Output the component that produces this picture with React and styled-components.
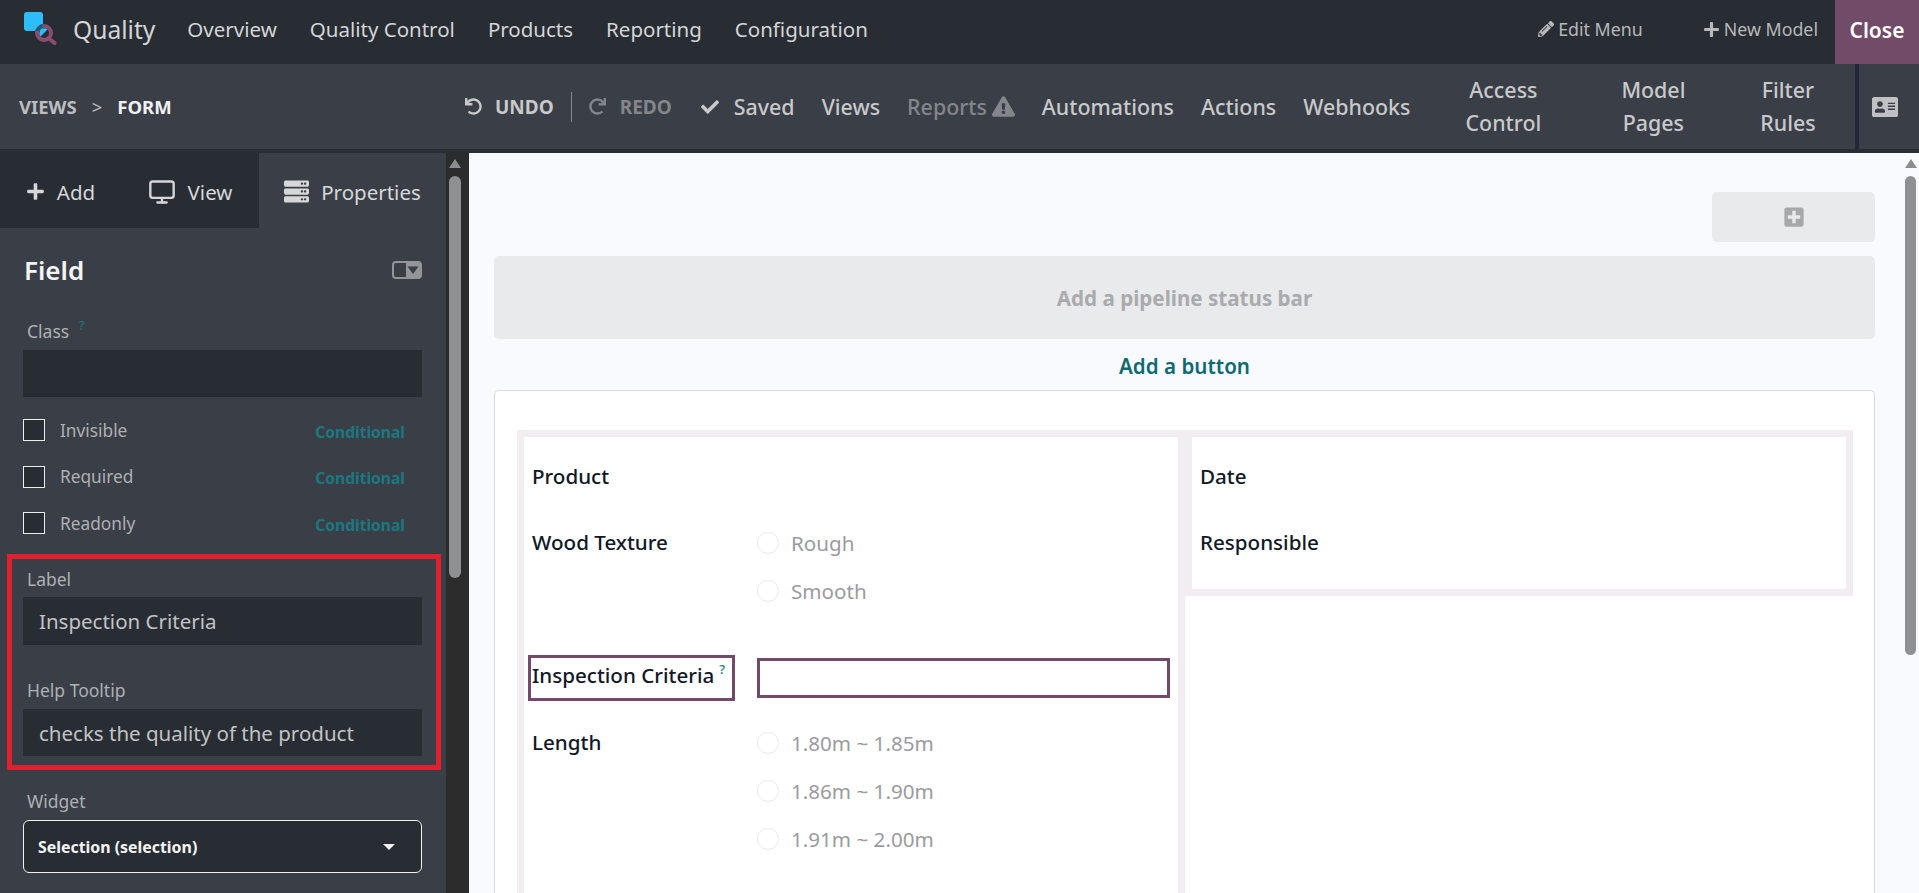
import React from 'react';
import styled, { createGlobalStyle } from 'styled-components';
import {
  FaPencilAlt, FaPlus, FaUndo, FaRedo, FaCheck, FaExclamationTriangle,
  FaAddressCard, FaServer, FaPlusSquare,
} from 'react-icons/fa';
import { FiMonitor } from 'react-icons/fi';

const GlobalStyle = createGlobalStyle`
  html, body { margin: 0; padding: 0; height: 100%; overflow: hidden; }
  body { font-family: 'Noto Sans', 'Open Sans', sans-serif; background: #f9fafe; }
  * { box-sizing: border-box; }
`;

const dark = '#282d34';
const panel = '#3a3f47';
const plum = '#714b67';
const teal = '#1a7880';

const Page = styled.div`
  height: 893px;
  width: 1919px;
  display: flex;
  flex-direction: column;
  overflow: hidden;
`;

/* top navbar */
const NavBar = styled.header`
  height: 64px;
  flex: none;
  display: flex;
  align-items: center;
  background: ${dark};
  color: #d4d5d7;
  font-size: 20.5px;
`;

const Logo = styled.svg`
  width: 36px;
  height: 36px;
  margin: 0 0 6px 23px;
  flex: none;
`;

const Brand = styled.span`
  font-size: 24.6px;
  margin-left: 14px;
  margin-right: 32px;
  padding-bottom: 6px;
`;

const NavLink = styled.span`
  margin-right: 33px;
  padding-bottom: 6px;
`;

const NavRight = styled.div`
  margin-left: auto;
  height: 100%;
  display: flex;
  align-items: center;
  font-size: 17.8px;
  color: #b6b8ba;
`;

const NavAction = styled.span`
  display: inline-flex;
  align-items: center;
  gap: 4px;
  padding-bottom: 6px;
  margin-right: ${({ $mr }) => $mr}px;
`;

const CloseButton = styled.span`
  width: 84px;
  height: 100%;
  padding-bottom: 5px;
  background: ${plum};
  color: #fff;
  font-size: 21px;
  font-weight: 600;
  display: flex;
  align-items: center;
  justify-content: center;
`;

/* studio sub navbar */
const SubBar = styled.div`
  height: 89px;
  flex: none;
  display: flex;
  align-items: stretch;
  background: ${panel};
  border-bottom: 4px solid ${dark};
  color: #c8c9cb;
  font-size: 21.4px;
  font-weight: 500;
`;

const Crumbs = styled.div`
  display: flex;
  align-items: center;
  padding-left: 19px;
  width: 465px;
  flex: none;
  font-size: 18.5px;
  font-weight: 700;
  color: #bcbdc0;
`;

const CrumbSep = styled.span`
  margin: 0 15px;
  font-weight: 400;
`;

const CrumbCurrent = styled.span`
  color: #f1f1f2;
`;

const SubItem = styled.span`
  display: inline-flex;
  align-items: center;
  gap: ${({ $gap }) => $gap ?? 13}px;
  color: ${({ $dim }) => ($dim ? '#83868b' : 'inherit')};
  margin-right: ${({ $mr }) => $mr ?? 27}px;
`;

const ActionLabel = styled.span`
  font-size: 19px;
  font-weight: 700;
`;

const SubGroup = styled.div`
  display: flex;
  align-items: center;
`;

const SubDivider = styled.span`
  width: 1px;
  height: 30px;
  background: #85888c;
  margin: 0 17px;
`;

const StackedItem = styled.div`
  display: flex;
  align-items: center;
  justify-content: center;
  text-align: center;
  line-height: 33px;
  padding-bottom: 2px;
  width: ${({ $w }) => $w}px;
`;

const CardSlot = styled.div`
  margin-left: auto;
  width: 64px;
  border-left: 4px solid #22283a;
  display: flex;
  align-items: center;
  justify-content: center;
  padding-right: 8px;
  color: #c0c1c3;
  font-size: 26px;
`;

/* body */
const Body = styled.div`
  flex: 1;
  min-height: 0;
  display: flex;
`;

const Sidebar = styled.aside`
  width: 446px;
  flex: none;
  background: ${panel};
  color: #aeb0b3;
  overflow: hidden;
`;

const Tabs = styled.div`
  height: 75px;
  display: grid;
  grid-template-columns: 121px 138px 187px;
  background: ${dark};
`;

const Tab = styled.div`
  display: flex;
  align-items: center;
  justify-content: center;
  gap: 12px;
  padding-top: 2px;
  font-size: 20.5px;
  color: #d6d7d9;
  background: ${({ $active }) => ($active ? panel : 'transparent')};
`;

const SideContent = styled.div`
  padding: 0 24px 0 23px;
`;

const FieldHeader = styled.div`
  display: flex;
  justify-content: space-between;
  align-items: center;
  height: 28px;
  margin-top: 28px;
  margin-bottom: 35px;
  padding-left: 1px;
  color: #f4f4f5;
  font-size: 26px;
  font-weight: 600;
`;

const FieldLabel = styled.div`
  height: 24px;
  line-height: 24px;
  padding-left: 4px;
  margin-bottom: ${({ $mb }) => $mb ?? 7}px;
  margin-top: ${({ $mt }) => $mt ?? 0}px;
  font-size: 17.5px;
  color: #aeb0b3;
`;

const Hint = styled.sup`
  color: ${teal};
  font-size: 13px;
  margin-left: 5px;
  vertical-align: 8px;
  line-height: 0;
`;

const TextField = styled.div`
  height: ${({ $h }) => $h}px;
  background: ${dark};
  padding-left: 16px;
  display: flex;
  align-items: center;
  font-size: 20.5px;
  color: #c2c3c5;
`;

const CheckRow = styled.div`
  height: 46.5px;
  display: flex;
  align-items: center;
  font-size: 17.3px;
`;

const CheckBox = styled.span`
  width: 22px;
  height: 22px;
  background: ${dark};
  border: 1px solid #eceded;
  margin-right: 15px;
`;

const Conditional = styled.span`
  margin-left: auto;
  margin-right: 17px;
  padding-top: 3px;
  color: ${teal};
  font-size: 15.6px;
  font-weight: 700;
`;

const CheckList = styled.div`
  margin-top: 10px;
`;

const Highlight = styled.div`
  border: 5px solid #e0202e;
  margin: 7.5px -19px 0 -16px;
  padding: 8px 14px 9px 11px;
`;

const SelectBox = styled.div`
  height: 53px;
  background: ${dark};
  border: 1px solid #f0f0f0;
  border-radius: 6px;
  display: flex;
  align-items: center;
  justify-content: space-between;
  padding: 0 26px 0 14px;
  color: #f4f4f5;
  font-size: 15.9px;
  font-weight: 700;
`;

const Caret = styled.span`
  width: 0;
  height: 0;
  border-left: 6px solid transparent;
  border-right: 6px solid transparent;
  border-top: 6px solid #f0f0f0;
`;

const Track = styled.div`
  flex: none;
  width: ${({ $w }) => $w}px;
  background: ${({ $bg }) => $bg};
  display: flex;
  flex-direction: column;
  align-items: flex-start;
  padding: 6px 0 0 ${({ $pl }) => $pl}px;
`;

const TrackArrow = styled.span`
  width: 0;
  height: 0;
  border-left: 6px solid transparent;
  border-right: 6px solid transparent;
  border-bottom: 9px solid #8c8d90;
`;

const Thumb = styled.span`
  width: ${({ $w }) => $w}px;
  height: ${({ $h }) => $h}px;
  margin-top: 8px;
  border-radius: 6px;
  background: #8f9092;
`;

const Canvas = styled.main`
  flex: 1;
  min-width: 0;
  background: #f9fafe;
  padding: 39px 30px 0 25px;
  display: flex;
  flex-direction: column;
`;

const AddBox = styled.div`
  align-self: flex-end;
  width: 163px;
  height: 50px;
  flex: none;
  margin-bottom: 14px;
  border-radius: 5px;
  background: #e9eaec;
  color: #a7a8aa;
  font-size: 22px;
  display: flex;
  align-items: center;
  justify-content: center;
`;

const StatusBar = styled.div`
  height: 83px;
  flex: none;
  border-radius: 5px;
  background: #e9eaec;
  color: #a9abad;
  font-size: 20.6px;
  font-weight: 700;
  display: flex;
  align-items: center;
  justify-content: center;
`;

const AddButton = styled.div`
  height: 53px;
  margin-bottom: -2px;
  flex: none;
  display: flex;
  align-items: center;
  justify-content: center;
  color: #0e6a72;
  font-size: 20.6px;
  font-weight: 600;
`;

const Sheet = styled.section`
  flex: 1;
  min-height: 0;
  background: #fff;
  border: 1px solid #d8dadd;
  border-bottom: 0;
  border-radius: 5px 5px 0 0;
  padding: 39px 21px 0 22px;
  display: grid;
  grid-template-columns: 668px 668px;
  align-items: start;
`;

const FormColumn = styled.div`
  height: ${({ $h }) => $h};
  border: 7px solid #f1edf0;
  border-bottom-width: ${({ $open }) => ($open ? 0 : 7)}px;
  padding: 19px 8px 0 4px;
`;

const Row = styled.div`
  display: grid;
  grid-template-columns: 229px 1fr;
  align-items: start;
  height: ${({ $h }) => $h}px;
`;

const RowLabel = styled.div`
  justify-self: start;
  height: 46px;
  width: ${({ $boxed }) => ($boxed ? '207px' : 'auto')};
  padding: 4px 0 0 1px;
  border: 3px solid ${({ $boxed }) => ($boxed ? plum : 'transparent')};
  color: #111827;
  font-size: 20.6px;
  font-weight: 500;
  line-height: 27px;
  white-space: nowrap;
`;

const LabelHint = styled.sup`
  color: ${teal};
  font-size: 13px;
  margin-left: 5px;
  vertical-align: 9px;
  line-height: 0;
`;

const EmptyInput = styled.div`
  height: 40px;
  margin-top: 3px;
  border: 3px solid ${plum};
`;

const RadioList = styled.div`
  margin-top: -3px;
`;

const RadioRow = styled.div`
  height: 48px;
  display: flex;
  align-items: center;
  gap: 12px;
  color: #9a9b9e;
  font-size: 20.6px;
`;

const RadioDot = styled.span`
  width: 22px;
  height: 22px;
  border-radius: 50%;
  border: 1px solid #e9eaeb;
  background: #fff;
`;

const FieldToggleIcon = () => (
  <svg width="30" height="18" viewBox="0 0 30 18">
    <rect x="1" y="1" width="28" height="16" rx="3" fill="none" stroke="#939598" strokeWidth="2" />
    <path d="M14 1h12a3 3 0 0 1 3 3v10a3 3 0 0 1-3 3H14z" fill="#939598" />
    <path d="M15.5 5.5h11L21 13z" fill={panel} />
  </svg>
);

const QualityLogo = () => (
  <Logo viewBox="0 0 36 36">
    <defs>
      <clipPath id="logo-blue">
        <rect x="1" y="1" width="19" height="19" rx="3" />
      </clipPath>
    </defs>
    <rect x="1" y="1" width="19" height="19" rx="3" fill="#2ebcfa" />
    <circle cx="21" cy="22" r="7" fill="none" stroke="#8a4d70" strokeWidth="4" />
    <path d="M26 27.5l5.5 4.5" stroke="#8a4d70" strokeWidth="4" strokeLinecap="round" />
    <circle cx="21" cy="22" r="7" fill="none" stroke="#1a5d78" strokeWidth="4" clipPath="url(#logo-blue)" />
    <path d="M17.5 25.5A5 5 0 0 1 24.5 18.5z" fill="#2ebcfa" />
  </Logo>
);

export default function App() {
  return (
    <Page>
      <GlobalStyle />
      <NavBar>
        <QualityLogo />
        <Brand>Quality</Brand>
        <NavLink>Overview</NavLink>
        <NavLink>Quality Control</NavLink>
        <NavLink>Products</NavLink>
        <NavLink>Reporting</NavLink>
        <NavLink>Configuration</NavLink>
        <NavRight>
          <NavAction $mr={60}><FaPencilAlt size={16} />Edit Menu</NavAction>
          <NavAction $mr={17}><FaPlus size={17} />New Model</NavAction>
          <CloseButton>Close</CloseButton>
        </NavRight>
      </NavBar>

      <SubBar>
        <Crumbs>
          VIEWS<CrumbSep>&gt;</CrumbSep><CrumbCurrent>FORM</CrumbCurrent>
        </Crumbs>
        <SubGroup>
          <SubItem $mr={0}><FaUndo size={17} /><ActionLabel>UNDO</ActionLabel></SubItem>
          <SubDivider />
          <SubItem $dim $mr={29} $gap={14}><FaRedo size={17} /><ActionLabel>REDO</ActionLabel></SubItem>
          <SubItem $gap={15}><FaCheck size={18} />Saved</SubItem>
          <SubItem>Views</SubItem>
          <SubItem $dim $gap={5}>Reports <FaExclamationTriangle size={23} /></SubItem>
          <SubItem>Automations</SubItem>
          <SubItem>Actions</SubItem>
          <SubItem $mr={33}>Webhooks</SubItem>
          <StackedItem $w={120}>Access<br />Control</StackedItem>
          <StackedItem $w={180}>Model<br />Pages</StackedItem>
          <StackedItem $w={89}>Filter<br />Rules</StackedItem>
        </SubGroup>
        <CardSlot><FaAddressCard /></CardSlot>
      </SubBar>

      <Body>
        <Sidebar>
          <Tabs>
            <Tab><FaPlus size={19} />Add</Tab>
            <Tab><FiMonitor size={28} />View</Tab>
            <Tab $active><FaServer size={25} />Properties</Tab>
          </Tabs>
          <SideContent>
            <FieldHeader>Field <FieldToggleIcon /></FieldHeader>
            <FieldLabel>Class <Hint>?</Hint></FieldLabel>
            <TextField $h={47} />
            <CheckList>
              <CheckRow><CheckBox />Invisible<Conditional>Conditional</Conditional></CheckRow>
              <CheckRow><CheckBox />Required<Conditional>Conditional</Conditional></CheckRow>
              <CheckRow><CheckBox />Readonly<Conditional>Conditional</Conditional></CheckRow>
            </CheckList>
            <Highlight>
              <FieldLabel $mb={6}>Label</FieldLabel>
              <TextField $h={48}>Inspection Criteria</TextField>
              <FieldLabel $mt={33}>Help Tooltip</FieldLabel>
              <TextField $h={47}>checks the quality of the product</TextField>
            </Highlight>
            <FieldLabel $mt={19}>Widget</FieldLabel>
            <SelectBox>Selection (selection)<Caret /></SelectBox>
          </SideContent>
        </Sidebar>
        <Track $w={23} $bg="#2c2c2c" $pl={3}>
          <TrackArrow />
          <Thumb $w={12} $h={402} />
        </Track>

        <Canvas>
          <AddBox><FaPlusSquare /></AddBox>
          <StatusBar>Add a pipeline status bar</StatusBar>
          <AddButton>Add a button</AddButton>
          <Sheet>
            <FormColumn $open $h="503px">
              <Row $h={66}><RowLabel>Product</RowLabel></Row>
              <Row $h={133}>
                <RowLabel>Wood Texture</RowLabel>
                <RadioList>
                  <RadioRow><RadioDot />Rough</RadioRow>
                  <RadioRow><RadioDot />Smooth</RadioRow>
                </RadioList>
              </Row>
              <Row $h={67}>
                <RowLabel $boxed>Inspection Criteria<LabelHint>?</LabelHint></RowLabel>
                <EmptyInput />
              </Row>
              <Row $h={150}>
                <RowLabel>Length</RowLabel>
                <RadioList>
                  <RadioRow><RadioDot />1.80m ~ 1.85m</RadioRow>
                  <RadioRow><RadioDot />1.86m ~ 1.90m</RadioRow>
                  <RadioRow><RadioDot />1.91m ~ 2.00m</RadioRow>
                </RadioList>
              </Row>
            </FormColumn>
            <FormColumn $h="166px">
              <Row $h={66}><RowLabel>Date</RowLabel></Row>
              <Row $h={66}><RowLabel>Responsible</RowLabel></Row>
            </FormColumn>
          </Sheet>
        </Canvas>
        <Track $w={14} $bg="#f9fafe" $pl={0}>
          <TrackArrow />
          <Thumb $w={11} $h={479} />
        </Track>
      </Body>
    </Page>
  );
}
